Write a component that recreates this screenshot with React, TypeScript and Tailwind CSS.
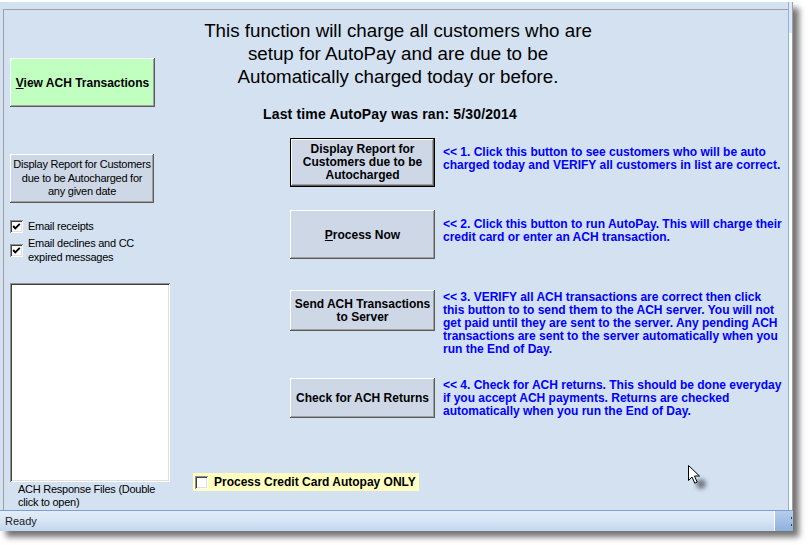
import React from "react";

const raised =
  "shadow-[inset_-1px_-1px_0_#5a5a5a,inset_1px_1px_0_#ffffff,inset_-2px_-2px_0_#a0a0a0]";
const sunken =
  "shadow-[inset_1px_1px_0_#909090,inset_-1px_-1px_0_#ffffff,inset_2px_2px_0_#404040,inset_-2px_-2px_0_#e0e0e0]";

function CheckBox({ checked }: { checked: boolean }) {
  return (
    <div
      className={`w-[13px] h-[13px] shrink-0 bg-white ${sunken} flex items-center justify-center`}
    >
      {checked && (
        <svg width="13" height="13" viewBox="0 0 13 13">
          <polyline
            points="3.2,6 5.3,8.4 9.8,3.8"
            fill="none"
            stroke="#000"
            strokeWidth="1.9"
          />
        </svg>
      )}
    </div>
  );
}

export default function App() {
  return (
    <div className="w-[808px] h-[545px] bg-white pt-[2px] font-['Liberation_Sans',Arial,sans-serif] relative overflow-hidden text-black">
      <div className="w-[793px] h-[529px] flex flex-col bg-[#d3e1f0] shadow-[6px_6px_6px_rgba(0,0,0,0.55)]">
        <div className="flex-1 flex min-h-0">
          <div className="w-[3px]" />
          <div className="flex-1 mt-[7px] border-t border-l border-[#a0a0a0] flex">
            {/* Left column */}
            <div className="w-[166px] pl-[6px] flex flex-col">
              <div
                className={`mt-[48px] w-[145px] h-[49px] bg-[#c0ffc0] ${raised} flex items-center justify-center text-[12px] font-bold`}
              >
                <span>
                  <u>V</u>iew ACH Transactions
                </span>
              </div>
              <div
                className={`mt-[47px] w-[144px] h-[49px] bg-[#cdd7e6] ${raised} flex items-center justify-center text-center text-[11px] leading-[13.5px] tracking-[-0.25px]`}
              >
                <span>
                  Display Report for Customers
                  <br />
                  due to be Autocharged for
                  <br />
                  any given date
                </span>
              </div>
              <div className="mt-[17px] h-[13px] flex items-center">
                <CheckBox checked />
                <span className="ml-[5px] text-[11px] leading-[13px] tracking-[-0.25px]">
                  Email receipts
                </span>
              </div>
              <div className="mt-[3px] flex items-center">
                <div className="mt-[1px]">
                  <CheckBox checked />
                </div>
                <span className="ml-[5px] text-[11px] leading-[14px] tracking-[-0.25px]">
                  Email declines and CC
                  <br />
                  expired messages
                </span>
              </div>
              <div className={`mt-[19px] w-[160px] h-[199px] bg-white ${sunken}`} />
              <div className="mt-[1px] ml-[8px] text-[11px] leading-[13px] tracking-[-0.25px] whitespace-nowrap">
                ACH Response Files (Double
                <br />
                click to open)
              </div>
            </div>

            {/* Right column */}
            <div className="flex-1 flex flex-col">
              <div className="mt-[9px] w-[456px] text-center text-[18.75px] leading-[23px]">
                This function will charge all customers who are
                <br />
                setup for AutoPay and are due to be
                <br />
                Automatically charged today or before.
              </div>
              <div className="mt-[18px] w-[440px] text-center text-[14px] leading-[16px] font-bold tracking-[0.15px]">
                Last time AutoPay was ran: 5/30/2014
              </div>

              {/* Row 1 */}
              <div className="mt-[16px] ml-[120px] flex items-start">
                <div className="w-[145px] h-[49px] border border-black bg-[#cdd7e6]">
                  <div
                    className={`w-full h-full ${raised} flex items-center justify-center text-center text-[12px] leading-[13px] font-bold`}
                  >
                    <span>
                      Display Report for
                      <br />
                      Customers due to be
                      <br />
                      Autocharged
                    </span>
                  </div>
                </div>
                <div className="ml-[8px] mt-[8px] text-[#0000ff] font-bold text-[12px] leading-[13px] whitespace-nowrap">
                  &lt;&lt; 1. Click this button to see customers who will be auto
                  <br />
                  charged today and VERIFY all customers in list are correct.
                </div>
              </div>

              {/* Row 2 */}
              <div className="mt-[23px] ml-[120px] flex items-start">
                <div
                  className={`w-[145px] h-[49px] bg-[#cdd7e6] ${raised} flex items-center justify-center text-[12px] font-bold`}
                >
                  <span>
                    <u>P</u>rocess Now
                  </span>
                </div>
                <div className="ml-[8px] mt-[8px] text-[#0000ff] font-bold text-[12px] leading-[13px] whitespace-nowrap">
                  &lt;&lt; 2. Click this button to run AutoPay. This will charge their
                  <br />
                  credit card or enter an ACH transaction.
                </div>
              </div>

              {/* Row 3 */}
              <div className="mt-[31px] ml-[120px] flex items-start">
                <div
                  className={`w-[145px] h-[41px] bg-[#cdd7e6] ${raised} flex items-center justify-center text-center text-[12px] leading-[13px] font-bold`}
                >
                  <span>
                    Send ACH Transactions
                    <br />
                    to Server
                  </span>
                </div>
                <div className="ml-[8px] mt-[1px] text-[#0000ff] font-bold text-[12px] leading-[13px] whitespace-nowrap">
                  &lt;&lt; 3. VERIFY all ACH transactions are correct then click
                  <br />
                  this button to to send them to the ACH server. You will not
                  <br />
                  get paid until they are sent to the server. Any pending ACH
                  <br />
                  transactions are sent to the server automatically when you
                  <br />
                  run the End of Day.
                </div>
              </div>

              {/* Row 4 */}
              <div className="mt-[22px] ml-[120px] flex items-start">
                <div
                  className={`w-[145px] h-[40px] bg-[#cdd7e6] ${raised} flex items-center justify-center text-[12px] font-bold`}
                >
                  Check for ACH Returns
                </div>
                <div className="ml-[8px] mt-[1px] text-[#0000ff] font-bold text-[12px] leading-[13px] whitespace-nowrap">
                  &lt;&lt; 4. Check for ACH returns. This should be done everyday
                  <br />
                  if you accept ACH payments. Returns are checked
                  <br />
                  automatically when you run the End of Day.
                </div>
              </div>

              {/* Credit card only */}
              <div className="mt-[55px] ml-[23px] w-[226px] h-[18px] bg-[#ffffc0] flex items-center pl-[2px]">
                <CheckBox checked={false} />
                <span className="ml-[6px] text-[12px] font-bold whitespace-nowrap">
                  Process Credit Card Autopay ONLY
                </span>
              </div>
            </div>
          </div>
          <div className="w-[5px] border-l border-[#8eb0de] border-r border-r-[#a0a0a0] bg-white flex flex-col">
            <div className="h-[31px] bg-[#dce8f6]" />
          </div>
        </div>

        {/* Status bar */}
        <div className="h-[21px] border-t border-[#7aa0d6] flex bg-linear-to-b from-[#e3edf9] via-[#d6e4f5] to-[#c4d6ee]">
          <div className="flex-1 flex items-center pl-[5px] text-[11px] text-[#1a1a1a]">
            Ready
          </div>
          <div className="w-[19px] border-l border-white bg-linear-to-b from-[#b6cdeb] to-[#8fb0de] relative">
            <div className="absolute right-[1px] top-[6px] w-[1px] h-[2px] bg-[#2c3e5a]" />
            <div className="absolute right-[1px] top-[13px] w-[1px] h-[2px] bg-[#2c3e5a]" />
          </div>
        </div>
      </div>

      {/* Mouse cursor */}
      <svg
        className="absolute left-[684px] top-[462px]"
        width="30"
        height="34"
        viewBox="0 0 30 34"
      >
        <defs>
          <filter id="blurShadow" x="-50%" y="-50%" width="200%" height="200%">
            <feGaussianBlur stdDeviation="2.2" />
          </filter>
        </defs>
        <ellipse cx="17" cy="22" rx="5" ry="5" fill="rgba(0,0,0,0.45)" filter="url(#blurShadow)" />
        <path
          d="M4.5 3.5 L4.5 18.5 L8 15 L10.8 21.2 L13.2 20.2 L10.5 14 L15.5 14 Z"
          fill="#ffffff"
          stroke="#000000"
          strokeWidth="1"
          strokeLinejoin="miter"
        />
      </svg>
    </div>
  );
}
